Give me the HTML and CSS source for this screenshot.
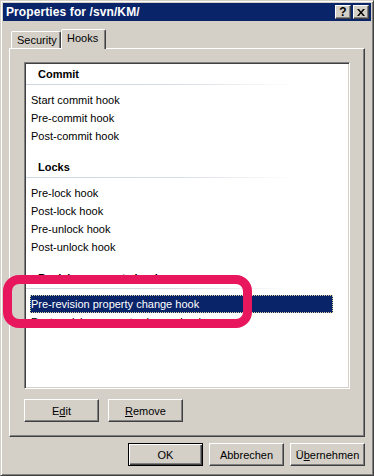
FILE: index.html
```html
<!DOCTYPE html>
<html>
<head>
<meta charset="utf-8">
<link rel="stylesheet" href="styles.css">
</head>
<body>
<div class="window">
  <div class="titlebar">
    <span class="title">Properties for /svn/KM/</span>
    <div class="caption-btns">
      <span class="cap-btn help">?</span>
      <span class="cap-btn close"><svg width="8" height="7" viewBox="0 0 8 7"><path d="M0 0h2l2 2.5L6 0h2L5 3.5 8 7H6L4 4.5 2 7H0l3-3.5z" fill="#000"/></svg></span>
    </div>
  </div>
  <div class="content">
    <div class="tabs">
      <div class="tab">Security</div>
      <div class="tab active">Hooks</div>
    </div>
    <div class="panel">
      <div class="list">
        <div class="group">
          <div class="group-head">Commit</div>
          <div class="group-line"></div>
          <div class="rows">
            <div class="row">Start commit hook</div>
            <div class="row">Pre-commit hook</div>
            <div class="row">Post-commit hook</div>
          </div>
        </div>
        <div class="group">
          <div class="group-head">Locks</div>
          <div class="group-line"></div>
          <div class="rows">
            <div class="row">Pre-lock hook</div>
            <div class="row">Post-lock hook</div>
            <div class="row">Pre-unlock hook</div>
            <div class="row">Post-unlock hook</div>
          </div>
        </div>
        <div class="group">
          <div class="group-head">Revision property hooks</div>
          <div class="group-line"></div>
          <div class="rows">
            <div class="row selected">Pre-revision property change hook</div>
            <div class="row">Post-revision property change hook</div>
          </div>
        </div>
      </div>
      <div class="panel-btns">
        <button class="btn">E<u>d</u>it</button>
        <button class="btn"><u>R</u>emove</button>
      </div>
    </div>
    <div class="footer">
      <button class="btn default">OK</button>
      <button class="btn">Abbrechen</button>
      <button class="btn">Ü<u>b</u>ernehmen</button>
    </div>
  </div>
  <div class="annotation"></div>
</div>
</body>
</html>
```
FILE: styles.css
```css
* { box-sizing: border-box; }
html, body { margin: 0; padding: 0; }
body {
  background: #d4d0c8;
  font-family: Tahoma, "Liberation Sans", Arial, sans-serif;
  font-size: 11px;
  color: #000;
}
.window {
  position: relative;
  width: 374px;
  height: 476px;
  background: #d4d0c8;
  border: 1px solid;
  border-color: #d4d0c8 #404040 #404040 #d4d0c8;
  box-shadow: inset 1px 1px #ffffff, inset -1px -1px #808080;
  padding: 2px;
  overflow: hidden;
}
.titlebar {
  height: 18px;
  background: #0a246a;
  display: flex;
  align-items: center;
  justify-content: space-between;
  padding: 0 2px 0 3px;
}
.title {
  color: #fff;
  font-weight: bold;
  font-size: 12px;
  letter-spacing: 0.1px;
}
.caption-btns { display: flex; gap: 2px; }
.cap-btn {
  width: 16px;
  height: 14px;
  background: #d4d0c8;
  border: 1px solid;
  border-color: #fff #404040 #404040 #fff;
  box-shadow: inset -1px -1px #808080;
  display: flex;
  align-items: center;
  justify-content: center;
  font-weight: bold;
  font-size: 12px;
  line-height: 12px;
}
.content { padding: 0 6px; }
.tabs {
  display: flex;
  align-items: flex-end;
  height: 19px;
  margin-top: 8px;
  padding-left: 2px;
}
.tab {
  height: 17px;
  width: 50px;
  padding: 2px 0 0 5px;
  border: 1px solid;
  border-bottom: none;
  border-color: #fff #404040 transparent #fff;
  box-shadow: inset -1px 0 #808080;
  border-radius: 2px 2px 0 0;
  line-height: 13px;
}
.tab.active {
  position: relative;
  z-index: 1;
  height: 20px;
  width: 45px;
  margin-bottom: -1px;
  background: #d4d0c8;
  padding: 2px 0 0 5px;
}
.panel {
  height: 389px;
  border: 1px solid;
  border-color: #fff #404040 #404040 #fff;
  box-shadow: inset -1px -1px #808080;
  padding: 13px 14px 14px 14px;
}
.list {
  height: 327px;
  background: #fff;
  border: 1px solid;
  border-color: #808080 #fff #fff #808080;
  box-shadow: inset 1px 1px #404040, inset -1px -1px #d4d0c8;
  padding: 1px;
  overflow: hidden;
}
.group + .group { margin-top: 12px; }
.group-head {
  height: 20px;
  line-height: 20px;
  padding-left: 12px;
  font-weight: bold;
}
.group-line {
  height: 1px;
  width: 270px;
  background: linear-gradient(to right, #cfd6de, #d6dce2 55%, #ffffff);
}
.rows { padding-top: 6px; }
.row {
  height: 18px;
  line-height: 18px;
  width: 303px;
  margin-left: 4px;
  padding-left: 1px;
  white-space: nowrap;
}
.row.selected {
  background: #0a246a;
  color: #fff;
  outline: 1px dotted #d8d0a0;
  outline-offset: -1px;
}
.panel-btns {
  display: flex;
  gap: 9px;
  margin-top: 10px;
}
.btn {
  width: 75px;
  height: 23px;
  padding: 0;
  font-family: Tahoma, "Liberation Sans", Arial, sans-serif;
  font-size: 11px;
  color: #000;
  background: #d4d0c8;
  border: 1px solid;
  border-color: #fff #404040 #404040 #fff;
  box-shadow: inset -1px -1px #808080;
}
.btn.default {
  border-color: #000;
  box-shadow: inset 1px 1px #fff, inset -1px -1px #404040, inset -2px -2px #808080;
}
.footer {
  display: flex;
  justify-content: flex-end;
  gap: 6px;
  margin-top: 6px;
}
.annotation {
  position: absolute;
  left: 2px;
  top: 274px;
  width: 249px;
  height: 53px;
  border: 9px solid #e8175d;
  border-radius: 16px;
  pointer-events: none;
}
```
